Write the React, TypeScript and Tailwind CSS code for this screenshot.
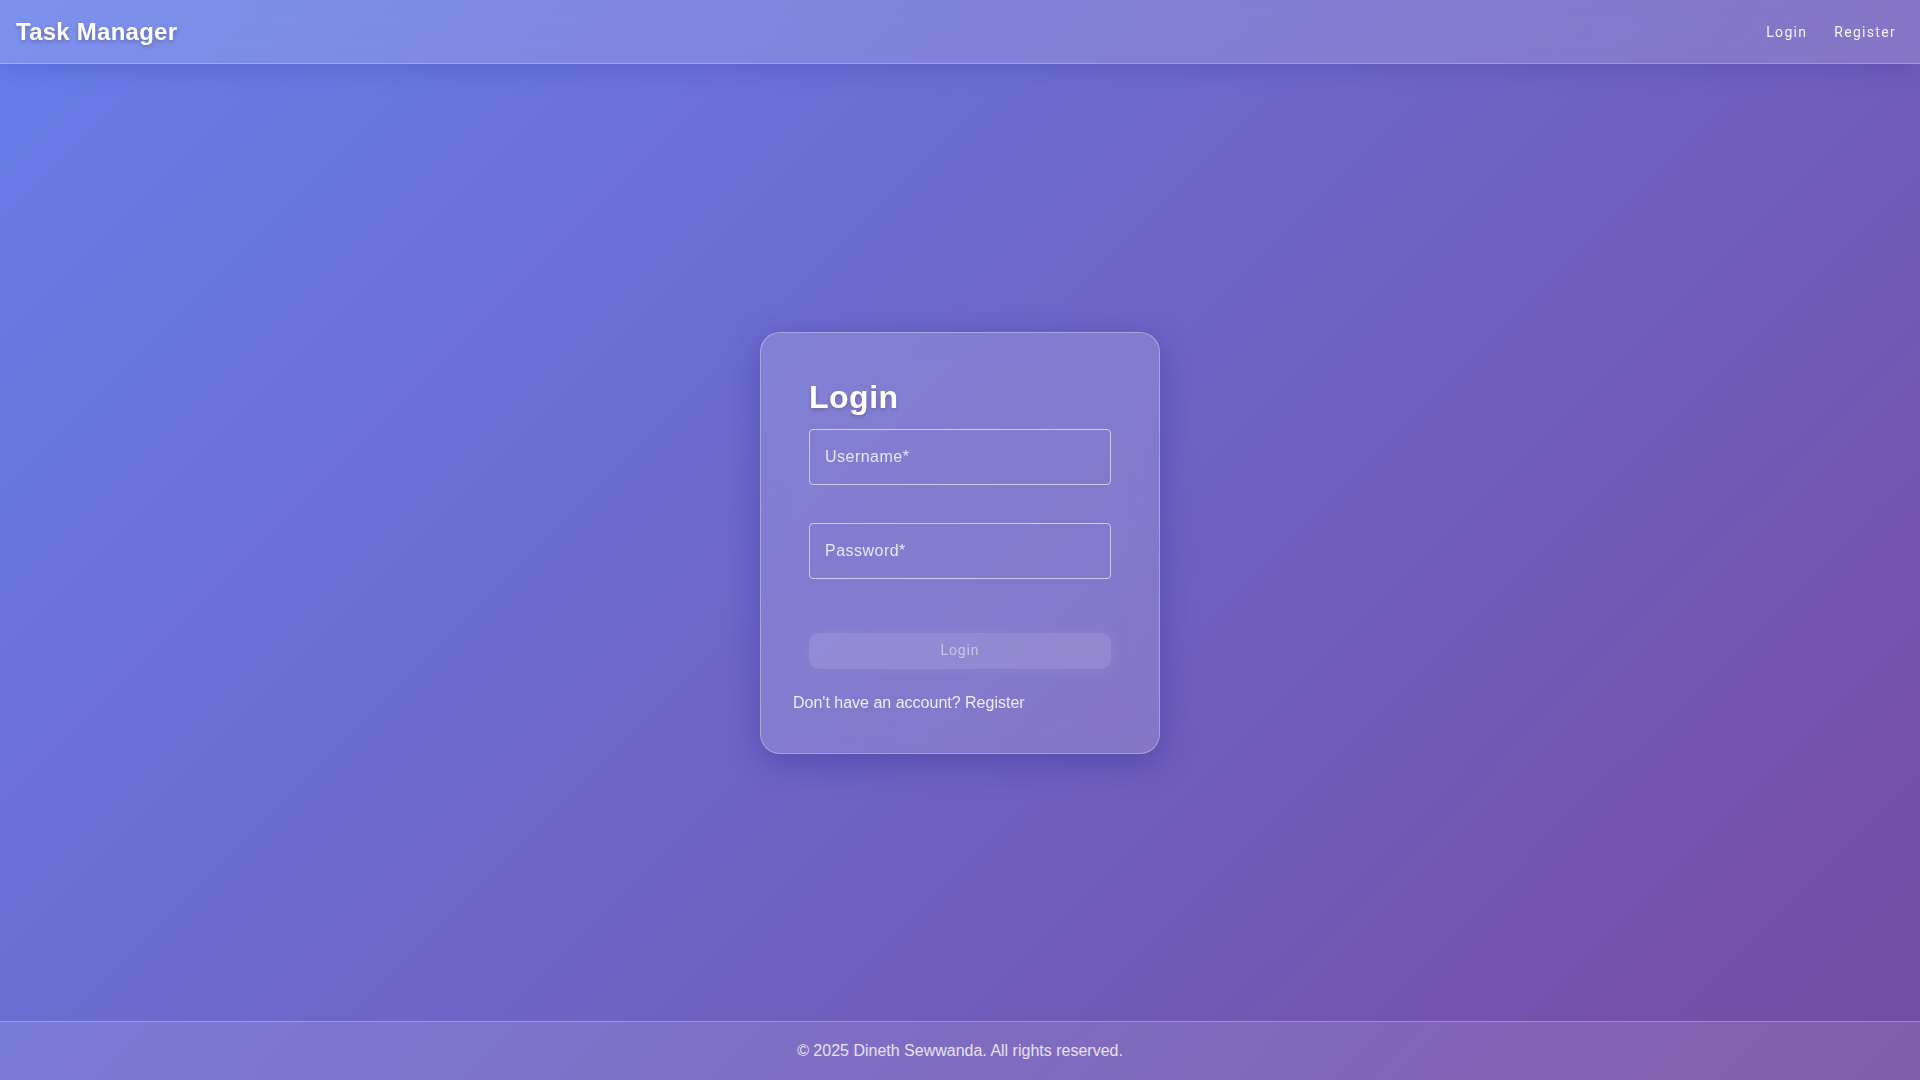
import React, { useState } from 'react';

const App: React.FC = () => {
  const [username, setUsername] = useState('');
  const [password, setPassword] = useState('');
  const canSubmit = username.length > 0 && password.length > 0;

  return (
    <div className="min-h-screen flex flex-col bg-[linear-gradient(135deg,#667eea_0%,#764ba2_100%)] font-['Liberation_Sans',Arial,sans-serif] text-white">
      <header className="h-[64px] shrink-0 flex items-center justify-between pl-4 pr-[24px] bg-white/15 backdrop-blur-md border-b border-white/25 shadow-[0_4px_24px_rgba(31,38,135,0.2)] z-10">
        <h1 className="text-[24px] leading-none font-bold tracking-[0.25px] [text-shadow:0_2px_4px_rgba(0,0,0,0.25)]">Task Manager</h1>
        <nav className="mt-[2px] flex items-center gap-[27px] font-['Roboto',sans-serif] text-[14px] tracking-[1.3px] text-white/90">
          <a href="#" className="hover:text-white">Login</a>
          <a href="#" className="hover:text-white">Register</a>
        </nav>
      </header>

      <main className="flex-1 flex items-center justify-center">
        <div className="w-[400px] bg-white/15 border border-white/30 rounded-[20px] backdrop-blur-md shadow-[0_8px_32px_rgba(31,38,135,0.37)] pt-[45px] pb-[38px] px-[48px]">
          <h2 className="text-[32px] leading-[38px] font-bold tracking-[0.5px] mb-[13px] [text-shadow:0_2px_4px_rgba(0,0,0,0.2)]">Login</h2>

          <div className="h-[56px] border border-white/60 rounded-[4px] flex items-center px-[15px]">
            <input
              value={username}
              onChange={e => setUsername(e.target.value)}
              placeholder="Username*"
              className="w-full bg-transparent outline-none text-[16px] tracking-[0.03em] text-white placeholder:text-white/80"
            />
          </div>

          <div className="h-[56px] mt-[38px] border border-white/60 rounded-[4px] flex items-center px-[15px]">
            <input
              type="password"
              value={password}
              onChange={e => setPassword(e.target.value)}
              placeholder="Password*"
              className="w-full bg-transparent outline-none text-[16px] tracking-[0.03em] text-white placeholder:text-white/80"
            />
          </div>

          <button
            disabled={!canSubmit}
            className="mt-[54px] w-full h-[36px] rounded-[10px] bg-white/12 shadow-[0_0_16px_rgba(255,255,255,0.06)] font-['Roboto',sans-serif] text-[14px] tracking-[0.9px] text-white/50"
          >
            Login
          </button>

          <p className="mt-[22px] -ml-4 text-[16px] leading-[24px] text-white/85">
            Don't have an account? <a href="#">Register</a>
          </p>
        </div>
      </main>

      <footer className="h-[59px] shrink-0 flex items-center justify-center bg-white/10 border-t border-white/25 text-[16px] text-white/80">
        © 2025 Dineth Sewwanda. All rights reserved.
      </footer>
    </div>
  );
};

export default App;
